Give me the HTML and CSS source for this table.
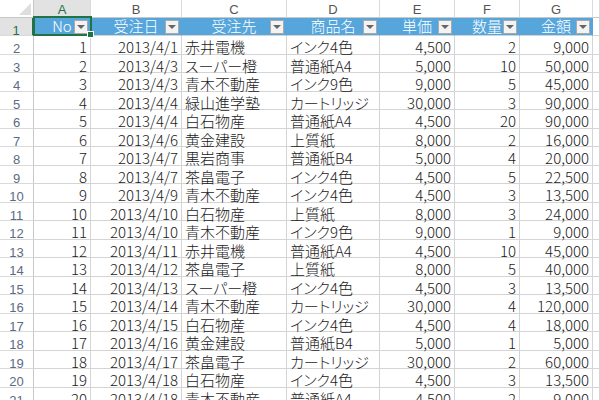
FILE: index.html
```html
<!DOCTYPE html>
<html lang="ja">
<head>
<meta charset="utf-8">
<title>Sheet</title>
<link rel="stylesheet" href="styles.css">
</head>
<body>
<div class="sheet">
  <div class="row colhdr">
    <div class="corner"><span class="tri"></span></div>
    <div class="ch sel">A</div>
    <div class="ch">B</div>
    <div class="ch">C</div>
    <div class="ch">D</div>
    <div class="ch">E</div>
    <div class="ch">F</div>
    <div class="ch">G</div>
    <div class="ch"></div>
  </div>
  <div class="row hdrrow">
    <div class="rh rsel">1</div>
    <div class="th">No<span class="dd"></span></div>
    <div class="th">受注日<span class="dd"></span></div>
    <div class="th">受注先<span class="dd"></span></div>
    <div class="th">商品名<span class="dd"></span></div>
    <div class="th">単価<span class="dd"></span></div>
    <div class="th">数量<span class="dd"></span></div>
    <div class="th">金額<span class="dd"></span></div>
    <div class="c"></div>
  </div>
  <div class="row"><div class="rh">2</div><div class="c r">1</div><div class="c r">2013/4/1</div><div class="c">赤井電機</div><div class="c">インク4色</div><div class="c r">4,500</div><div class="c r">2</div><div class="c r">9,000</div><div class="c"></div></div>
  <div class="row"><div class="rh">3</div><div class="c r">2</div><div class="c r">2013/4/3</div><div class="c">スーパー橙</div><div class="c">普通紙A4</div><div class="c r">5,000</div><div class="c r">10</div><div class="c r">50,000</div><div class="c"></div></div>
  <div class="row"><div class="rh">4</div><div class="c r">3</div><div class="c r">2013/4/3</div><div class="c">青木不動産</div><div class="c">インク9色</div><div class="c r">9,000</div><div class="c r">5</div><div class="c r">45,000</div><div class="c"></div></div>
  <div class="row"><div class="rh">5</div><div class="c r">4</div><div class="c r">2013/4/4</div><div class="c">緑山進学塾</div><div class="c">カートリッジ</div><div class="c r">30,000</div><div class="c r">3</div><div class="c r">90,000</div><div class="c"></div></div>
  <div class="row"><div class="rh">6</div><div class="c r">5</div><div class="c r">2013/4/4</div><div class="c">白石物産</div><div class="c">普通紙A4</div><div class="c r">4,500</div><div class="c r">20</div><div class="c r">90,000</div><div class="c"></div></div>
  <div class="row"><div class="rh">7</div><div class="c r">6</div><div class="c r">2013/4/6</div><div class="c">黄金建設</div><div class="c">上質紙</div><div class="c r">8,000</div><div class="c r">2</div><div class="c r">16,000</div><div class="c"></div></div>
  <div class="row"><div class="rh">8</div><div class="c r">7</div><div class="c r">2013/4/7</div><div class="c">黒岩商事</div><div class="c">普通紙B4</div><div class="c r">5,000</div><div class="c r">4</div><div class="c r">20,000</div><div class="c"></div></div>
  <div class="row"><div class="rh">9</div><div class="c r">8</div><div class="c r">2013/4/7</div><div class="c">茶畠電子</div><div class="c">インク4色</div><div class="c r">4,500</div><div class="c r">5</div><div class="c r">22,500</div><div class="c"></div></div>
  <div class="row"><div class="rh">10</div><div class="c r">9</div><div class="c r">2013/4/9</div><div class="c">青木不動産</div><div class="c">インク4色</div><div class="c r">4,500</div><div class="c r">3</div><div class="c r">13,500</div><div class="c"></div></div>
  <div class="row"><div class="rh">11</div><div class="c r">10</div><div class="c r">2013/4/10</div><div class="c">白石物産</div><div class="c">上質紙</div><div class="c r">8,000</div><div class="c r">3</div><div class="c r">24,000</div><div class="c"></div></div>
  <div class="row"><div class="rh">12</div><div class="c r">11</div><div class="c r">2013/4/10</div><div class="c">青木不動産</div><div class="c">インク9色</div><div class="c r">9,000</div><div class="c r">1</div><div class="c r">9,000</div><div class="c"></div></div>
  <div class="row"><div class="rh">13</div><div class="c r">12</div><div class="c r">2013/4/11</div><div class="c">赤井電機</div><div class="c">普通紙A4</div><div class="c r">4,500</div><div class="c r">10</div><div class="c r">45,000</div><div class="c"></div></div>
  <div class="row"><div class="rh">14</div><div class="c r">13</div><div class="c r">2013/4/12</div><div class="c">茶畠電子</div><div class="c">上質紙</div><div class="c r">8,000</div><div class="c r">5</div><div class="c r">40,000</div><div class="c"></div></div>
  <div class="row"><div class="rh">15</div><div class="c r">14</div><div class="c r">2013/4/13</div><div class="c">スーパー橙</div><div class="c">インク4色</div><div class="c r">4,500</div><div class="c r">3</div><div class="c r">13,500</div><div class="c"></div></div>
  <div class="row"><div class="rh">16</div><div class="c r">15</div><div class="c r">2013/4/14</div><div class="c">青木不動産</div><div class="c">カートリッジ</div><div class="c r">30,000</div><div class="c r">4</div><div class="c r">120,000</div><div class="c"></div></div>
  <div class="row"><div class="rh">17</div><div class="c r">16</div><div class="c r">2013/4/15</div><div class="c">白石物産</div><div class="c">インク4色</div><div class="c r">4,500</div><div class="c r">4</div><div class="c r">18,000</div><div class="c"></div></div>
  <div class="row"><div class="rh">18</div><div class="c r">17</div><div class="c r">2013/4/16</div><div class="c">黄金建設</div><div class="c">普通紙B4</div><div class="c r">5,000</div><div class="c r">1</div><div class="c r">5,000</div><div class="c"></div></div>
  <div class="row"><div class="rh">19</div><div class="c r">18</div><div class="c r">2013/4/17</div><div class="c">茶畠電子</div><div class="c">カートリッジ</div><div class="c r">30,000</div><div class="c r">2</div><div class="c r">60,000</div><div class="c"></div></div>
  <div class="row"><div class="rh">20</div><div class="c r">19</div><div class="c r">2013/4/18</div><div class="c">白石物産</div><div class="c">インク4色</div><div class="c r">4,500</div><div class="c r">3</div><div class="c r">13,500</div><div class="c"></div></div>
  <div class="row"><div class="rh">21</div><div class="c r">20</div><div class="c r">2013/4/18</div><div class="c">青木不動産</div><div class="c">普通紙A4</div><div class="c r">4,500</div><div class="c r">2</div><div class="c r">9,000</div><div class="c"></div></div>
  <div class="selbox"><span class="handle"></span></div>
</div>
</body>
</html>
```
FILE: styles.css
```css
html, body {
  margin: 0;
  padding: 0;
  background: #fff;
}
body {
  font-family: "Noto Sans CJK JP", sans-serif;
}
.sheet {
  position: relative;
  width: 600px;
  height: 400px;
  overflow: hidden;
}
.row {
  display: grid;
  grid-template-columns: 34px 57px 91px 105px 93px 75px 65px 73px 1fr;
  height: 18.5px;
}
.row > div {
  box-sizing: border-box;
  white-space: nowrap;
}
.colhdr {
  height: 17.5px;
}
.corner {
  display: flex;
  justify-content: flex-end;
  align-items: flex-end;
  padding: 0 2px 2px 0;
  border-right: 1px solid #c8c8c8;
  border-bottom: 1px solid #c8c8c8;
}
.tri {
  width: 0;
  height: 0;
  border-left: 12px solid transparent;
  border-bottom: 12px solid #dedede;
}
.ch {
  border-right: 1px solid #dadada;
  border-bottom: 1px solid #c8c8c8;
  font-family: "Liberation Sans", "Noto Sans CJK JP", sans-serif;
  font-size: 13px;
  line-height: 12px;
  padding-top: 4px;
  text-align: center;
  color: #555;
}
.ch.sel {
  background: #e2e2e2;
  color: #217346;
  border-bottom: 2px solid #217346;
}
.rh {
  border-right: 1px solid #c8c8c8;
  border-bottom: 1px solid #dadada;
  font-family: "Liberation Sans", "Noto Sans CJK JP", sans-serif;
  font-size: 13px;
  line-height: 9px;
  padding-top: 8px;
  text-align: center;
  color: #5a6c84;
}
.rh.rsel {
  background: #e2e2e2;
  color: #217346;
  border-right: 2px solid #217346;
}
.c {
  border-right: 1px solid #d4d4d4;
  border-bottom: 1px solid #d4d4d4;
  font-size: 15px;
  font-weight: 300;
  line-height: 13px;
  padding: 4px 3px 0 3px;
  color: #1a1a1a;
  font-feature-settings: "palt";
}
.r {
  text-align: right;
}
.th {
  position: relative;
  background: #56a6dc;
  border-right: 1px solid #56a6dc;
  border-bottom: 1px solid #d4d4d4;
  color: #fff;
  font-size: 15px;
  font-weight: 300;
  line-height: 13px;
  padding-top: 1.5px;
  text-align: center;
}
.dd {
  position: absolute;
  right: 2px;
  top: 2.5px;
  width: 14px;
  height: 14px;
  box-sizing: border-box;
  border: 1px solid #a9a9a9;
  background: #f3f3f3;
  display: flex;
  align-items: center;
  justify-content: center;
}
.dd::after {
  content: "";
  width: 0;
  height: 0;
  border-left: 4px solid transparent;
  border-right: 4px solid transparent;
  border-top: 4px solid #666;
}
.selbox {
  position: absolute;
  left: 33px;
  top: 16px;
  width: 59px;
  height: 20px;
  box-sizing: border-box;
  border: 2px solid #217346;
  pointer-events: none;
}
.handle {
  position: absolute;
  right: -4px;
  bottom: -4px;
  width: 5px;
  height: 5px;
  background: #217346;
  border: 1px solid #fff;
}
```
